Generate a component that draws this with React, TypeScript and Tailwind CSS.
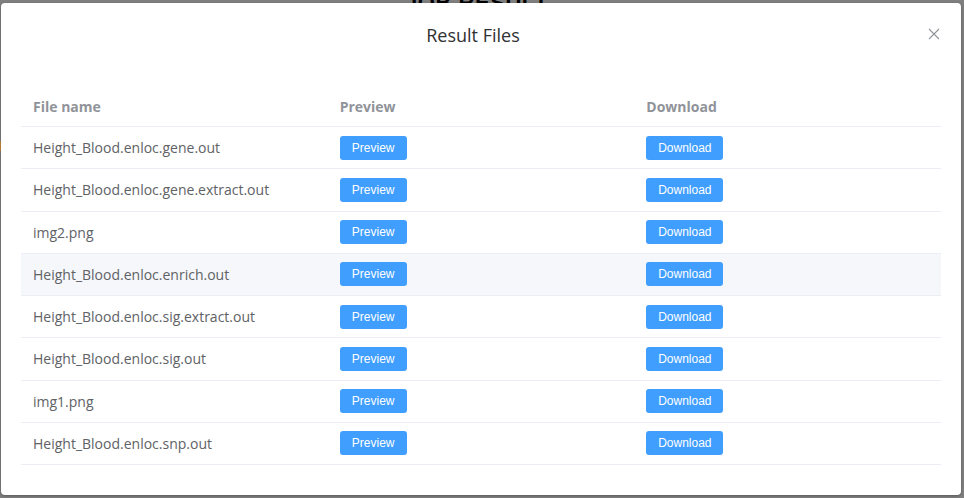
import React from 'react'

const files = [
  'Height_Blood.enloc.gene.out',
  'Height_Blood.enloc.gene.extract.out',
  'img2.png',
  'Height_Blood.enloc.enrich.out',
  'Height_Blood.enloc.sig.extract.out',
  'Height_Blood.enloc.sig.out',
  'img1.png',
  'Height_Blood.enloc.snp.out',
]

const font = { fontFamily: '"Open Sans", "Noto Sans", sans-serif' }
const btnFont = { fontFamily: '"Liberation Sans", sans-serif' }

const App = () => {
  return (
    <div className='relative w-[964px] h-[498px] bg-[#7f7f7f] overflow-hidden' style={font}>
      {/* page behind the overlay */}
      <div className='absolute left-[405px] -top-[14px] text-[22px] font-bold text-black tracking-wide' style={btnFont}>
        JOB RESULT
      </div>
      <div className='absolute left-0 top-[141px] w-[1px] h-[10px] bg-[#c98a3a]' />

      {/* dialog */}
      <div className='relative ml-[1px] mt-[3px] w-[960px] h-[492px] bg-white rounded-[4px] shadow-[0_1px_3px_rgba(0,0,0,0.3)]'>
        <div className='relative pl-5 pr-[36px] pt-5 pb-[10px]'>
          <h2 className='text-center text-[18px] leading-6 text-[#303133]'>Result Files</h2>
          <button className='absolute right-[21px] top-[25px] text-[#909399]'>
            <svg width='12' height='12' viewBox='0 0 12 12' fill='none' stroke='currentColor' strokeWidth='1.1'>
              <path d='M1 1L11 11M11 1L1 11' />
            </svg>
          </button>
        </div>

        <div className='px-5 pt-[30px]'>
          <div className='w-[920px] text-[14px]'>
            <div className='grid grid-cols-3 h-[40px] items-center border-b border-[#ebeef5] font-bold text-[#909399]'>
              <div className='pl-3'>File name</div>
              <div className='pl-3'>Preview</div>
              <div className='pl-3'>Download</div>
            </div>
            {files.map((f, i) => (
              <div
                key={f}
                className={
                  'grid grid-cols-3 h-[42.25px] items-center border-b border-[#ebeef5] text-[#606266] ' +
                  (i === 3 ? 'bg-[#f5f7fa]' : '')
                }
              >
                <div className='pl-3 whitespace-nowrap'>{f}</div>
                <div className='pl-3'>
                  <button className='w-[67px] h-[24px] rounded-[3px] bg-[#409eff] text-white text-[12px] leading-none' style={btnFont}>
                    Preview
                  </button>
                </div>
                <div className='pl-3'>
                  <button className='w-[77px] h-[24px] rounded-[3px] bg-[#409eff] text-white text-[12px] leading-none' style={btnFont}>
                    Download
                  </button>
                </div>
              </div>
            ))}
          </div>
        </div>
      </div>
    </div>
  )
}

export default App
